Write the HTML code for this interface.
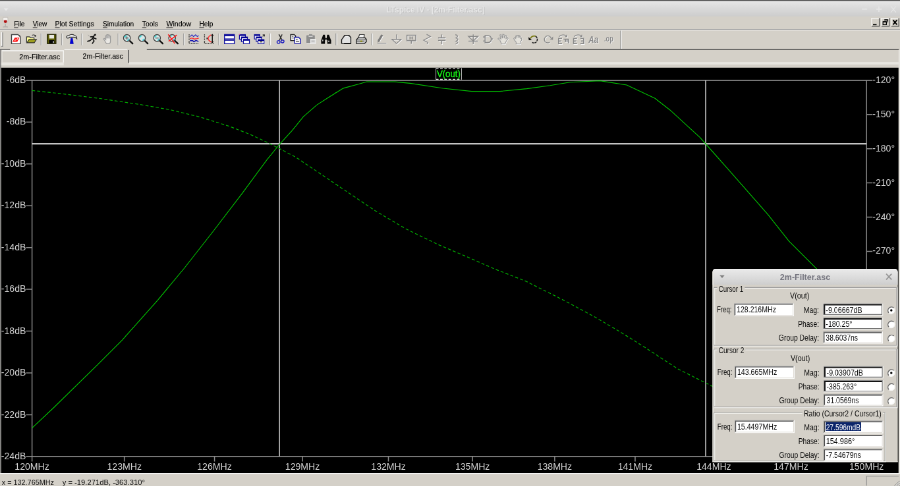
<!DOCTYPE html>
<html><head><meta charset="utf-8"><title>LTspice IV - [2m-Filter.asc]</title>
<style>
html,body{margin:0;padding:0;width:900px;height:486px;overflow:hidden;background:#d4d0c8}
body{position:relative}
#app{position:absolute;left:0;top:0;width:900px;height:486px;overflow:hidden;background:#d4d0c8}
#stage{position:absolute;left:0;top:0;width:1366px;height:738px;overflow:hidden;transform-origin:0 0;transform:scale(0.658858);will-change:transform}
svg{position:absolute;left:0;top:0;display:block;font-family:"Liberation Sans",sans-serif}
</style></head><body>
<div id="app">
<div id="stage">
<svg width="1366" height="737.64" viewBox="0 0 900 486">
<g id="chrome">
<defs>
<filter id="shw" x="-5%" y="-30%" width="110%" height="170%"><feDropShadow dx="0.55" dy="0.55" stdDeviation="0" flood-color="#fbfbfb" flood-opacity="1"/></filter>
<filter id="shd" x="-5%" y="-30%" width="110%" height="170%"><feDropShadow dx="0.4" dy="0.5" stdDeviation="0.15" flood-color="#b8b8b8" flood-opacity="1"/></filter>
<linearGradient id="gt" x1="0" y1="0" x2="0" y2="1"><stop offset="0" stop-color="#e9e9e9"/><stop offset="0.4" stop-color="#dddddd"/><stop offset="1" stop-color="#cdcdcd"/></linearGradient>
<linearGradient id="gd" x1="0" y1="0" x2="0" y2="1"><stop offset="0" stop-color="#f2f2f2"/><stop offset="0.1" stop-color="#e8e8e8"/><stop offset="0.55" stop-color="#dcdcdc"/><stop offset="1" stop-color="#cecece"/></linearGradient>
</defs>
<rect x="0" y="0" width="900" height="486" fill="#d4d0c8"/>
<rect x="0" y="0" width="900" height="16.3" fill="url(#gt)"/>
<rect x="0" y="0" width="900" height="0.9" fill="#4a4a4a"/>
<path d="M0,29.4 H900" stroke="#9a9a9a" stroke-width="0.7"/><path d="M0,30.1 H900" stroke="#f4f4f4" stroke-width="0.7"/>
<path d="M146.8,49.4 H899" stroke="#4a4a4a" stroke-width="0.9"/>
<path d="M0,49.4 H10" stroke="#5a5a5a" stroke-width="0.9"/>
<path d="M0.6,49 V473.4" stroke="#707070" stroke-width="0.9"/>
<rect x="1.2" y="62.3" width="62.6" height="3.1" fill="#e8e6e0"/>
<rect x="128.8" y="62" width="770" height="2.5" fill="#e7e5df"/>
<path d="M1.8,50.7 H63.4 V62.4" fill="none" stroke="#f8f8f6" stroke-width="0.9"/>
<path d="M2,51 V62.4" fill="none" stroke="#e6e4de" stroke-width="0.9"/>
<path d="M64.3,49.4 H127.4" stroke="#f6f6f4" stroke-width="0.9"/>
<path d="M128.5,50 V63" stroke="#505050" stroke-width="1"/>
<rect x="898.5" y="49.8" width="1.5" height="424" fill="#e6e4de"/>
<path d="M3.6,8.2 H8.4 L6,10.8 Z" fill="#e9e9e9"/>
<g stroke="#e6e6e6" stroke-width="1.1" fill="none"><path d="M862,9.1 H867.2"/><path d="M876.2,9.1 H881.6 M878.9,6.3 V11.9"/><path d="M890.8,6.2 L896,12.4 M896,6.2 L890.8,12.4" stroke-width="0.9"/></g>
<path d="M3.1,17.3 H7.7 Q8.5,21 7.3,22.7 Q5.4,24.4 3.5,22.7 Q2.3,21 3.1,17.3 Z" fill="#f1efec" stroke="#c2beba" stroke-width="0.6"/>
<path d="M3.7,20.4 Q5.4,19.8 7.1,20.4 Q7.2,22 6.4,22.7 Q5.4,23.3 4.4,22.7 Q3.6,22 3.7,20.4 Z" fill="#b01010"/>
<path d="M5.4,23.8 V26.6" stroke="#b4b0ac" stroke-width="0.9" fill="none"/><path d="M3,27 Q5.4,25.8 7.8,27 Z" fill="#c4c0bc" stroke="#aeaaa6" stroke-width="0.5"/>
<g>
<path d="M871.6,26.2 V18.2 H879.2" stroke="#fbfbfb" stroke-width="0.7" fill="none"/><path d="M871.6,26.3 H879.3 V18.2" stroke="#505050" stroke-width="0.8" fill="none"/>
<path d="M881.5,26.2 V18.2 H889.1" stroke="#fbfbfb" stroke-width="0.7" fill="none"/><path d="M881.5,26.3 H889.2 V18.2" stroke="#505050" stroke-width="0.8" fill="none"/>
<path d="M891.3,26.2 V18.2 H898.6" stroke="#fbfbfb" stroke-width="0.7" fill="none"/><path d="M891.3,26.3 H898.8 V18.2" stroke="#505050" stroke-width="0.8" fill="none"/>
<path d="M873,24.6 H876.6" stroke="#000" stroke-width="1.1"/>
<path d="M884.4,19.8 H887.8 V22.4 M883,21.6 H886.4 V24.6 H883 Z" stroke="#000" stroke-width="0.8" fill="none"/><path d="M884.4,20 H887.8 M883,21.9 H886.4" stroke="#000" stroke-width="1"/>
<path d="M893,20 L897,24.6 M897,20 L893,24.6" stroke="#000" stroke-width="1.2"/>
</g>
<path d="M620.6,30.6 V48.8" stroke="#8c8c8c" stroke-width="0.8"/><path d="M621.4,30.6 V48.8" stroke="#f6f6f6" stroke-width="0.8"/>
<path d="M1.6,32.2 V46.2" stroke="#f8f8f8" stroke-width="0.9"/><path d="M2.6,32.4 V46.4 H1.4" stroke="#8c8c8c" stroke-width="0.8" fill="none"/>
<path d="M41,33.4 V45.2" stroke="#9a9a9a" stroke-width="0.8"/><path d="M41.8,33.4 V45.2" stroke="#f2f2f2" stroke-width="0.8"/>
<path d="M61.7,33.4 V45.2" stroke="#9a9a9a" stroke-width="0.8"/><path d="M62.5,33.4 V45.2" stroke="#f2f2f2" stroke-width="0.8"/>
<path d="M81.7,33.4 V45.2" stroke="#9a9a9a" stroke-width="0.8"/><path d="M82.5,33.4 V45.2" stroke="#f2f2f2" stroke-width="0.8"/>
<path d="M118,33.4 V45.2" stroke="#9a9a9a" stroke-width="0.8"/><path d="M118.8,33.4 V45.2" stroke="#f2f2f2" stroke-width="0.8"/>
<path d="M183.7,33.4 V45.2" stroke="#9a9a9a" stroke-width="0.8"/><path d="M184.5,33.4 V45.2" stroke="#f2f2f2" stroke-width="0.8"/>
<path d="M218.7,33.4 V45.2" stroke="#9a9a9a" stroke-width="0.8"/><path d="M219.5,33.4 V45.2" stroke="#f2f2f2" stroke-width="0.8"/>
<path d="M269.7,33.4 V45.2" stroke="#9a9a9a" stroke-width="0.8"/><path d="M270.5,33.4 V45.2" stroke="#f2f2f2" stroke-width="0.8"/>
<path d="M336,33.4 V45.2" stroke="#9a9a9a" stroke-width="0.8"/><path d="M336.8,33.4 V45.2" stroke="#f2f2f2" stroke-width="0.8"/>
<path d="M371.7,33.4 V45.2" stroke="#9a9a9a" stroke-width="0.8"/><path d="M372.5,33.4 V45.2" stroke="#f2f2f2" stroke-width="0.8"/>
<path d="M11.5,34.6 H18 L20.3,36.9 V43.7 H11.5 Z" fill="#fff" stroke="#404040" stroke-width="0.9"/><path d="M12.4,41.8 L14.8,37.6 H19.6 L17.2,41.8 Z" fill="#ff1818"/><path d="M14.6,40.6 L16.2,39.6 M16.8,39.4 L18,38.4" stroke="#fff" stroke-width="0.7"/><path d="M18.2,34.8 L20.2,36.8 V35.6 Z" fill="#303030"/>
<path d="M26.6,42.6 V36.8 H29.6 L30.4,37.8 H34 V39.4" fill="#ffff9a" stroke="#303030" stroke-width="0.8"/><path d="M26.8,42.8 L29,39.4 H36.4 L34.2,42.8 Z" fill="#a0a020" stroke="#303030" stroke-width="0.8"/><path d="M32,35.6 Q33.4,34.2 35,35.4" stroke="#505050" stroke-width="0.7" fill="none"/><rect x="34.6" y="35.2" width="1.4" height="1.4" fill="#101010"/>
<rect x="47.3" y="34.4" width="8.6" height="9.2" fill="#5c5c06" stroke="#202000" stroke-width="0.9"/><rect x="49.2" y="34.9" width="4.8" height="3.6" fill="#e8e8e0"/><rect x="49" y="40.2" width="5.4" height="3.2" fill="#050505"/><rect x="52.8" y="41" width="1" height="2" fill="#d0d0d0"/>
<path d="M66.6,37.6 Q66.2,35.6 68.6,35.6 Q71.6,33.6 74.6,35.4 Q76.8,36 76.8,38.6 Q75.6,36.8 73.4,37.2 H69.6 Q68.2,38.8 66.6,37.6 Z" fill="#f4f4f4" stroke="#282828" stroke-width="0.8"/><path d="M70.9,38.2 H72.5 L73.4,43.8 H70 Z" fill="#0000d8" stroke="#0000a0" stroke-width="0.3"/>
<g stroke="#101010" stroke-width="1.1" fill="none" stroke-linecap="round"><path d="M94.6,34.6 L92.6,38.4 L94,41 L92.4,43.4"/><path d="M92.6,38.4 L89.6,40.8 L87.6,41.2"/><path d="M93.6,36.6 L90.6,36.8"/><path d="M93.4,37.8 L96,38.8"/></g><circle cx="95.2" cy="34.8" r="0.9" fill="#101010"/><path d="M88,35 L89.4,36.2" stroke="#909090" stroke-width="0.6"/>
<path d="M104.6,40.4 L103.4,39 L104.4,38.4 L105.8,39.6 V35.6 H106.8 V38.4 V34.6 H108 V38.4 V35 H109.2 V38.6 V36 H110.4 V41.4 Q110.4,43.6 108.6,43.6 H106.4 Z" fill="#e9e7e3" stroke="#9a9a9a" stroke-width="0.8"/>
<path d="M129.5,40.6 L132.6,43.6" stroke="#101010" stroke-width="1.5" stroke-linecap="round"/>
<circle cx="126.9" cy="38" r="3.4" fill="#d8e8e8" stroke="#404040" stroke-width="0.9"/>
<path d="M124.7,37.4 A2.4,2.4 0 0 1 126.5,35.7" stroke="#30e0e0" stroke-width="1" fill="none"/>
<path d="M129.1,38.6 A2.4,2.4 0 0 1 127.30000000000001,40.3" stroke="#30c8d8" stroke-width="1" fill="none"/>
<path d="M125.30000000000001,38 H128.5 M126.9,36.4 V39.6" stroke="#505050" stroke-width="0.8"/>
<path d="M144.6,40.6 L147.7,43.6" stroke="#101010" stroke-width="1.5" stroke-linecap="round"/>
<circle cx="142.0" cy="38" r="3.4" fill="#d8e8e8" stroke="#404040" stroke-width="0.9"/>
<path d="M139.8,37.4 A2.4,2.4 0 0 1 141.6,35.7" stroke="#30e0e0" stroke-width="1" fill="none"/>
<path d="M144.2,38.6 A2.4,2.4 0 0 1 142.4,40.3" stroke="#30c8d8" stroke-width="1" fill="none"/>
<path d="M159.6,40.6 L162.7,43.6" stroke="#101010" stroke-width="1.5" stroke-linecap="round"/>
<circle cx="157.0" cy="38" r="3.4" fill="#d8e8e8" stroke="#404040" stroke-width="0.9"/>
<path d="M154.8,37.4 A2.4,2.4 0 0 1 156.6,35.7" stroke="#30e0e0" stroke-width="1" fill="none"/>
<path d="M159.2,38.6 A2.4,2.4 0 0 1 157.4,40.3" stroke="#30c8d8" stroke-width="1" fill="none"/>
<path d="M155.4,38 H158.6" stroke="#606060" stroke-width="0.9"/>
<path d="M174.7,40.6 L177.79999999999998,43.6" stroke="#101010" stroke-width="1.5" stroke-linecap="round"/>
<circle cx="172.1" cy="38" r="3.4" fill="#d8e8e8" stroke="#404040" stroke-width="0.9"/>
<path d="M169.9,37.4 A2.4,2.4 0 0 1 171.7,35.7" stroke="#30e0e0" stroke-width="1" fill="none"/>
<path d="M174.29999999999998,38.6 A2.4,2.4 0 0 1 172.5,40.3" stroke="#30c8d8" stroke-width="1" fill="none"/>
<path d="M168.2,34.4 L174.79999999999998,43.6 M176.79999999999998,35 L168.6,41.2" stroke="#ff1818" stroke-width="1"/>
<path d="M189.10000000000002,34.4 V43.6 H198.70000000000002" stroke="#101010" stroke-width="0.9" fill="none" stroke-dasharray="0.8 0.8"/><path d="M190.10000000000002,36.6 L191.9,34.8 L193.5,36.6 L195.5,34.8 L197.3,36.6 L198.70000000000002,35.6" stroke="#3030c0" stroke-width="0.8" fill="none"/><path d="M189.9,38.6 L191.9,38 L194.3,39 L196.70000000000002,38.6 L198.70000000000002,38.2" stroke="#ff2020" stroke-width="0.9" fill="none"/><path d="M189.9,40.6 H192.70000000000002 L193.9,41.8 L195.9,40.4 L198.5,41.4" stroke="#1010b0" stroke-width="1" fill="none"/>
<path d="M204.5,34.4 V43.6 H213.89999999999998" stroke="#101010" stroke-width="0.9" fill="none" stroke-dasharray="0.8 0.8"/><path d="M212.29999999999998,34.6 V42.6" stroke="#101010" stroke-width="0.9" fill="none"/><path d="M211.29999999999998,35.8 L212.29999999999998,34.4 L213.29999999999998,35.8 M211.29999999999998,41.4 L212.29999999999998,42.8 L213.29999999999998,41.4" stroke="#101010" stroke-width="0.7" fill="none"/><path d="M211.1,34.8 Q205.1,38.4 211.29999999999998,42.2" stroke="#ff3030" stroke-width="0.9" fill="none"/><rect x="206.5" y="37.6" width="1.2" height="1.6" fill="#202020"/>
<rect x="224.5" y="34.5" width="9.8" height="9.2" fill="#fff" stroke="#1010a0" stroke-width="0.9"/><path d="M224.5,35.4 H234.3 M224.5,40 H234.3" stroke="#000090" stroke-width="1.3"/><path d="M224.5,38.8 H234.3" stroke="#1010a0" stroke-width="0.7"/>
<rect x="239.4" y="34.6" width="6" height="4.6" fill="#fff" stroke="#1010a0" stroke-width="0.8"/><path d="M239.4,35.2 H245.4" stroke="#000090" stroke-width="1.4"/>
<rect x="241.4" y="37" width="6" height="4.6" fill="#fff" stroke="#1010a0" stroke-width="0.8"/><path d="M241.4,37.6 H247.4" stroke="#000090" stroke-width="1.4"/>
<rect x="243.4" y="39.4" width="6" height="4.2" fill="#fff" stroke="#1010a0" stroke-width="0.8"/><path d="M243.4,40.0 H249.4" stroke="#000090" stroke-width="1.4"/>
<rect x="239.2" y="34.2" width="0.8" height="0.8" fill="#e040a0"/>
<rect x="254.4" y="34.6" width="5.4" height="4.4" fill="#fff" stroke="#1010a0" stroke-width="0.8"/><path d="M254.4,35.2 H259.8" stroke="#000090" stroke-width="1.4"/>
<rect x="256.2" y="37" width="5.4" height="4.4" fill="#fff" stroke="#1010a0" stroke-width="0.8"/><path d="M256.2,37.6 H261.59999999999997" stroke="#000090" stroke-width="1.4"/>
<rect x="258" y="39.6" width="6" height="4" fill="#fff" stroke="#1010a0" stroke-width="0.8"/><path d="M258,40.2 H264" stroke="#000090" stroke-width="1.4"/>
<rect x="259.6" y="41.2" width="2.8" height="1.2" fill="#303030"/><path d="M262.4,34.4 H264.8 V36.8 Z" fill="#303030"/><path d="M262.6,36.4 L264.2,34.8" stroke="#303030" stroke-width="0.8"/>
<path d="M278.9,34.4 L282.3,40.4 M282.09999999999997,34.4 L279.3,40.4" stroke="#303030" stroke-width="1" fill="none"/><ellipse cx="278.5" cy="42" rx="1.5" ry="1.4" fill="none" stroke="#2020c0" stroke-width="0.9"/><ellipse cx="282.5" cy="41.4" rx="1.5" ry="1.4" fill="none" stroke="#2020c0" stroke-width="0.9"/>
<path d="M290.6,34.6 H294.2 L295.6,36 V40.6 H290.6 Z" fill="#f0f0f0" stroke="#202020" stroke-width="0.9"/><path d="M291.8,36.4 H293.4 M291.8,38 H294.4" stroke="#606060" stroke-width="0.7"/><path d="M294.6,37.2 H298.6 L300.6,39.2 V43.4 H294.6 Z" fill="#f4f4f4" stroke="#1818a8" stroke-width="0.9"/><path d="M295.8,39.6 H297.6 M295.8,41.2 H299.2" stroke="#505050" stroke-width="0.8"/>
<rect x="306.4" y="35.2" width="8.4" height="8" rx="0.6" fill="#8e8e8e"/><rect x="309" y="34.2" width="3.2" height="1.6" fill="#8e8e8e"/><path d="M308.6,36.4 H312.6" stroke="#e8e8e8" stroke-width="0.7"/><rect x="310.6" y="39.2" width="5" height="4.4" fill="#dcdcdc" stroke="#f4f4f4" stroke-width="0.6"/><path d="M311.4,41 H314.6" stroke="#9a9a9a" stroke-width="0.6"/><path d="M306.6,43.8 H310.4" stroke="#fafafa" stroke-width="0.7"/>
<path d="M323.09999999999997,34.8 H324.9 L325.3,38 H326.7,L327.09999999999997,34.8 H328.9 L331.09999999999997,40.4 V43.8 H327.3 V40.2 H324.9 V43.8 H321.09999999999997 V40.4 Z" fill="#080808"/><rect x="322.3" y="39.6" width="0.9" height="1.6" fill="#e0e0e0"/><rect x="328.3" y="40.6" width="0.9" height="1.6" fill="#e0e0e0"/><rect x="325.5" y="38.8" width="1" height="1" fill="#d0d0d0"/>
<path d="M341.6,43.4 V39.6 L344.6,35.4 H349 L350.8,37.4 V43.4 Z" fill="#e2e2e2" stroke="#181818" stroke-width="0.9"/><path d="M344,43.6 H350.8" stroke="#101010" stroke-width="1.1"/><path d="M345.4,36.4 H348" stroke="#fff" stroke-width="0.8"/>
<path d="M358.3,37.8 L359.5,34.6 H364.3 L363.9,37.8" fill="#f4f4f4" stroke="#303030" stroke-width="0.8"/><path d="M356.3,39.8 L358.3,37.6 H364.9 L366.3,39.2 V41.8 L364.3,43.6 H356.3 Z" fill="#c8c8c8" stroke="#202020" stroke-width="0.9"/><path d="M356.3,40 H364.09999999999997 L366.09999999999997,38.8 M356.7,41.8 H364.09999999999997" stroke="#404040" stroke-width="0.6" fill="none"/><rect x="360.3" y="40.6" width="2" height="1" fill="#b0b000"/>
<g transform="translate(0.6,0.6)"><path d="M377.6,43.2 H386.4" stroke="#f6f6f6" stroke-width="0.8" fill="none"/></g><path d="M377.6,43.2 H386.4" stroke="#8a8a8a" stroke-width="0.8" fill="none"/>
<path d="M381.2,34.4 L383.2,35.4 L379.8,41.2 L377.6,42.6 L377.8,40 Z" fill="#7c7c7c"/><path d="M383.2,36 L380,41.4" stroke="#f6f6f6" stroke-width="0.7"/>
<g transform="translate(0.6,0.6)"><path d="M396.5,34.4 V39.4 M391.90000000000003,39.4 H401.1 L396.5,43.6 Z" stroke="#f6f6f6" stroke-width="0.9" fill="none"/></g><path d="M396.5,34.4 V39.4 M391.90000000000003,39.4 H401.1 L396.5,43.6 Z" stroke="#8a8a8a" stroke-width="0.9" fill="none"/>
<g transform="translate(0.6,0.6)"><path d="M406.90000000000003,35.2 H415.7 V40.6 H406.90000000000003 Z M411.3,40.6 V43.8" stroke="#f6f6f6" stroke-width="1.0" fill="none"/></g><path d="M406.90000000000003,35.2 H415.7 V40.6 H406.90000000000003 Z M411.3,40.6 V43.8" stroke="#8a8a8a" stroke-width="1.0" fill="none"/>
<path d="M409.90000000000003,36.6 V39.4 M412.5,36.6 V39.4 M409.90000000000003,38 H412.5" stroke="#8a8a8a" stroke-width="0.8" fill="none"/>
<g transform="translate(0.6,0.6)"><path d="M426.6,34.4 L430.4,36.6 L423.6,40.2 L427.6,42.4 L427.2,44.2" stroke="#f6f6f6" stroke-width="0.9" fill="none"/></g><path d="M426.6,34.4 L430.4,36.6 L423.6,40.2 L427.6,42.4 L427.2,44.2" stroke="#8a8a8a" stroke-width="0.9" fill="none"/>
<g transform="translate(0.6,0.6)"><path d="M441.7,34.4 V37.6 M438.09999999999997,37.8 H445.5 M438.09999999999997,40.4 H445.5 M441.7,40.6 V44.2" stroke="#f6f6f6" stroke-width="1.0" fill="none"/></g><path d="M441.7,34.4 V37.6 M438.09999999999997,37.8 H445.5 M438.09999999999997,40.4 H445.5 M441.7,40.6 V44.2" stroke="#8a8a8a" stroke-width="1.0" fill="none"/>
<g transform="translate(0.6,0.6)"><path d="M455.4,34.6 Q459.4,36 456,38 Q459.8,39.6 456,41.2 Q459.6,42.6 455.6,44" stroke="#f6f6f6" stroke-width="0.9" fill="none"/></g><path d="M455.4,34.6 Q459.4,36 456,38 Q459.8,39.6 456,41.2 Q459.6,42.6 455.6,44" stroke="#8a8a8a" stroke-width="0.9" fill="none"/>
<g transform="translate(0.6,0.6)"><path d="M473.2,34.4 V44.2 M468.4,36.4 H478 L473.2,41 Z M468.6,41.2 H477.8" stroke="#f6f6f6" stroke-width="0.9" fill="none"/></g><path d="M473.2,34.4 V44.2 M468.4,36.4 H478 L473.2,41 Z M468.6,41.2 H477.8" stroke="#8a8a8a" stroke-width="0.9" fill="none"/>
<g transform="translate(0.6,0.6)"><path d="M483.09999999999997,37 H484.9 M483.09999999999997,41 H484.9 M485.09999999999997,35.6 H487.7 Q491.3,35.8 491.3,39 Q491.3,42.4 487.7,42.6 H485.09999999999997 Z M491.3,39 H492.9" stroke="#f6f6f6" stroke-width="1.1" fill="none"/></g><path d="M483.09999999999997,37 H484.9 M483.09999999999997,41 H484.9 M485.09999999999997,35.6 H487.7 Q491.3,35.8 491.3,39 Q491.3,42.4 487.7,42.6 H485.09999999999997 Z M491.3,39 H492.9" stroke="#8a8a8a" stroke-width="1.1" fill="none"/>
<g transform="translate(0.5,0.5)"><path d="M499.90000000000003,40.2 L497.90000000000003,38.8 L498.90000000000003,37.8 L500.90000000000003,39 L499.90000000000003,35 L501.1,34.6 L502.3,38.2 L502.7,34.4 L504.1,34.6 L504.1,38.2 L505.3,35.2 L506.5,35.8 L505.90000000000003,38.6 L507.5,37.6 L508.1,38.6 L505.7,42 L504.90000000000003,44 H501.5 Z" fill="none" stroke="#f8f8f8" stroke-width="0.7"/></g><path d="M499.90000000000003,40.2 L497.90000000000003,38.8 L498.90000000000003,37.8 L500.90000000000003,39 L499.90000000000003,35 L501.1,34.6 L502.3,38.2 L502.7,34.4 L504.1,34.6 L504.1,38.2 L505.3,35.2 L506.5,35.8 L505.90000000000003,38.6 L507.5,37.6 L508.1,38.6 L505.7,42 L504.90000000000003,44 H501.5 Z" fill="#e4e2dc" stroke="#9a9a9a" stroke-width="0.7"/>
<g transform="translate(0.5,0.5)"><path d="M514.9,40.6 L513.6999999999999,38.6 L514.6999999999999,37.6 L515.6999999999999,38.4 V36 H516.9 V37.8 V35.2 H518.0999999999999 V37.8 V35.4 H519.3,V37.8 V36.2 H520.5 V38.4 L521.5,38 L521.6999999999999,40 L520.3,42 V44 H516.0999999999999 V42.2 Z" fill="none" stroke="#f8f8f8" stroke-width="0.7"/></g><path d="M514.9,40.6 L513.6999999999999,38.6 L514.6999999999999,37.6 L515.6999999999999,38.4 V36 H516.9 V37.8 V35.2 H518.0999999999999 V37.8 V35.4 H519.3,V37.8 V36.2 H520.5 V38.4 L521.5,38 L521.6999999999999,40 L520.3,42 V44 H516.0999999999999 V42.2 Z" fill="#e4e2dc" stroke="#9a9a9a" stroke-width="0.7"/>
<path d="M530.4,38.4 Q532.2,35.2 535.6,36.2" stroke="#7a7a10" stroke-width="1.2" fill="none"/><path d="M535.6,36.2 Q538.4,38.6 536.6,41.6 Q534.6,43.8 532.2,42.4" stroke="#202020" stroke-width="1" fill="none" stroke-dasharray="2.4 0.6"/><path d="M528.4,37 L531.8,39.8 L528.8,40.2 Z" fill="#101010"/>
<g transform="translate(0.6,0.6)"><path d="M551.0999999999999,38 Q549.3,35 546.3,36.2 Q543.3,38.4 544.9,41.4 Q546.9,43.8 549.6999999999999,42.2" stroke="#f6f6f6" stroke-width="0.9" fill="none"/></g><path d="M551.0999999999999,38 Q549.3,35 546.3,36.2 Q543.3,38.4 544.9,41.4 Q546.9,43.8 549.6999999999999,42.2" stroke="#8a8a8a" stroke-width="0.9" fill="none"/>
<path d="M553.0999999999999,36.6 L549.9,39.4 L552.9,39.8 Z" fill="#8a8a8a"/>
<g transform="translate(0.6,0.6)"><path d="M559,36.6 Q562.6,33.4 566.6,36 M566.8,34.8 V36.6 H565.2" stroke="#f6f6f6" stroke-width="0.8" fill="none"/></g><path d="M559,36.6 Q562.6,33.4 566.6,36 M566.8,34.8 V36.6 H565.2" stroke="#8a8a8a" stroke-width="0.8" fill="none"/>
<g transform="translate(0.6,0.6)"><path d="M562,38.4 H558.6 V43.6 H562 M558.6,41 H561.2" stroke="#f6f6f6" stroke-width="1.1" fill="none"/></g><path d="M562,38.4 H558.6 V43.6 H562 M558.6,41 H561.2" stroke="#8a8a8a" stroke-width="1.1" fill="none"/>
<g transform="translate(0.6,0.6)"><path d="M563.6,39.2 H568.4 V43.4 M565.4,39.4 V42 M567,39.4 V42" stroke="#f6f6f6" stroke-width="1.1" fill="none"/></g><path d="M563.6,39.2 H568.4 V43.4 M565.4,39.4 V42 M567,39.4 V42" stroke="#8a8a8a" stroke-width="1.1" fill="none"/>
<g transform="translate(0.6,0.6)"><path d="M574,36.6 Q577.6,33.4 581.6,36 M581.8,34.8 V36.6 H580.2" stroke="#f6f6f6" stroke-width="0.8" fill="none"/></g><path d="M574,36.6 Q577.6,33.4 581.6,36 M581.8,34.8 V36.6 H580.2" stroke="#8a8a8a" stroke-width="0.8" fill="none"/>
<g transform="translate(0.6,0.6)"><path d="M577,38.4 H573.6 V43.6 H577 M573.6,41 H576.2" stroke="#f6f6f6" stroke-width="1.1" fill="none"/></g><path d="M577,38.4 H573.6 V43.6 H577 M573.6,41 H576.2" stroke="#8a8a8a" stroke-width="1.1" fill="none"/>
<g transform="translate(0.6,0.6)"><path d="M580.4,38.4 H583.6 V43.6 H580.4 M581.2,41 H583.6" stroke="#f6f6f6" stroke-width="1.1" fill="none"/></g><path d="M580.4,38.4 H583.6 V43.6 H580.4 M581.2,41 H583.6" stroke="#8a8a8a" stroke-width="1.1" fill="none"/>
<path d="M14.0,27.55 h4.1 M32.8,27.55 h4.4 M55.0,27.55 h4.6 M102.8,27.55 h4.4 M142.2,27.55 h4.1 M166.3,27.55 h6.6 M199.3,27.55 h4.8" stroke="#303030" stroke-width="0.6" fill="none"/>
<g>
<text x="14.00" y="26.30" font-size="7.7" fill="#000000" textLength="10.70" lengthAdjust="spacingAndGlyphs" stroke="#000" stroke-width="0.1">File</text>
<text x="32.80" y="26.30" font-size="7.7" fill="#000000" textLength="14.20" lengthAdjust="spacingAndGlyphs" stroke="#000" stroke-width="0.1">View</text>
<text x="55.00" y="26.30" font-size="7.7" fill="#000000" textLength="39.00" lengthAdjust="spacingAndGlyphs" stroke="#000" stroke-width="0.1">Plot Settings</text>
<text x="102.80" y="26.30" font-size="7.7" fill="#000000" textLength="31.10" lengthAdjust="spacingAndGlyphs" stroke="#000" stroke-width="0.1">Simulation</text>
<text x="142.20" y="26.30" font-size="7.7" fill="#000000" textLength="15.80" lengthAdjust="spacingAndGlyphs" stroke="#000" stroke-width="0.1">Tools</text>
<text x="166.30" y="26.30" font-size="7.7" fill="#000000" textLength="24.90" lengthAdjust="spacingAndGlyphs" stroke="#000" stroke-width="0.1">Window</text>
<text x="199.30" y="26.30" font-size="7.7" fill="#000000" textLength="13.70" lengthAdjust="spacingAndGlyphs" stroke="#000" stroke-width="0.1">Help</text>
<text x="19.30" y="59.30" font-size="7.7" fill="#000000" textLength="40.70" lengthAdjust="spacingAndGlyphs" stroke="#000" stroke-width="0.1">2m-Filter.asc</text>
<text x="82.70" y="58.60" font-size="7.7" fill="#000000" textLength="40.40" lengthAdjust="spacingAndGlyphs" stroke="#000" stroke-width="0.1">2m-Filter.asc</text>
<text x="386.30" y="12.50" font-size="8.2" font-weight="bold" fill="#e9e9e9" textLength="98.30" lengthAdjust="spacingAndGlyphs" filter="url(#shd)">LTspice IV - [2m-Filter.asc]</text>
<text x="588.60" y="43.10" font-size="9.4" font-weight="bold" fill="#8a8a8a" textLength="9.80" lengthAdjust="spacingAndGlyphs" font-style="italic" filter="url(#shw)">Aa</text>
<text x="604.20" y="41.70" font-size="8.2" font-weight="bold" fill="#8a8a8a" textLength="9.10" lengthAdjust="spacingAndGlyphs" filter="url(#shw)">.op</text>
</g>
</g>
<g id="plot">
<rect x="1.2" y="67.7" width="897.3" height="405.4" fill="#000"/>
<g stroke="#8c8c8c" stroke-width="1" fill="none">
<path d="M32.0,80.3 H866.5 V456.5 H32.0 Z"/>
<path d="M26.0,80.3 H32.0 M26.0,122.1 H32.0 M26.0,163.9 H32.0 M26.0,205.7 H32.0 M26.0,247.5 H32.0 M26.0,289.3 H32.0 M26.0,331.1 H32.0 M26.0,372.9 H32.0 M26.0,414.7 H32.0 M26.0,456.5 H32.0 M866.5,80.3 H872.5 M866.5,114.5 H872.5 M866.5,148.7 H872.5 M866.5,182.9 H872.5 M866.5,217.1 H872.5 M866.5,251.3 H872.5 M866.5,285.5 H872.5 M866.5,319.7 H872.5 M866.5,353.9 H872.5 M866.5,388.1 H872.5 M866.5,422.3 H872.5 M866.5,456.5 H872.5 M32.0,456.5 V461.5 M124.3,456.5 V461.5 M214.5,456.5 V461.5 M302.5,456.5 V461.5 M388.4,456.5 V461.5 M472.5,456.5 V461.5 M554.7,456.5 V461.5 M635.1,456.5 V461.5 M713.8,456.5 V461.5 M790.9,456.5 V461.5 M866.5,456.5 V461.5"/>
</g>
<path d="M32.0,143.8 H866.5" stroke="#f0f0f0" stroke-width="1.3" fill="none"/>
<path d="M279.5,80.3 V456.5 M705.6,80.3 V456.5" stroke="#c4c4c4" stroke-width="1" fill="none"/>
<path d="M32.0,90.5 L60.0,93.5 L100.0,98.5 L140.0,104.5 L170.0,109.7 L200.0,117.0 L230.0,126.5 L250.8,134.7 L261.6,139.7 L266.3,142.0 L271.5,144.6 L275.8,146.8 L282.3,150.0 L287.5,153.0 L293.3,155.8 L298.3,158.8 L303.3,162.3 L308.3,165.6 L344.4,190.0 L375.6,211.0 L406.7,229.3 L437.8,244.4 L466.7,256.7 L494.4,268.9 L525.6,281.1 L561.1,298.9 L594.4,316.7 L618.9,331.1 L645.6,347.8 L677.8,368.9 L711.0,385.6 L760.0,410.0 L866.0,456.0" stroke="#00b000" stroke-width="0.78" fill="none" stroke-dasharray="3.1 2.1"/>
<path d="M32.0,428.0 L53.3,408.0 L97.8,364.4 L122.2,340.0 L157.8,300.0 L184.4,268.0 L213.3,231.1 L242.2,193.3 L266.7,160.0 L279.5,144.3 L287.1,135.9 L292.1,130.5 L303.3,116.7 L316.7,105.0 L328.3,97.5 L343.3,88.2 L358.3,84.2 L366.7,81.7 L395.0,81.8 L410.0,83.3 L443.0,88.3 L471.7,91.3 L500.0,91.3 L526.7,88.7 L550.0,85.5 L570.0,82.2 L600.0,80.8 L626.7,85.0 L655.0,98.3 L670.0,110.0 L688.3,126.7 L700.0,137.5 L705.6,143.8 L736.7,178.9 L767.8,214.4 L788.9,241.0 L815.6,267.8 L840.0,294.0 L866.0,322.0" stroke="#00c400" stroke-width="0.75" fill="none"/>
<path d="M435.9,68.4 V79.4 M461.5,68.4 V79.4" fill="none" stroke="#b4b4b4" stroke-width="0.7"/>
<path d="M435.9,68.5 H461.5 M435.9,79.3 H461.5" fill="none" stroke="#dcdcdc" stroke-width="0.8" stroke-dasharray="2.6 1.6"/>
<g>
<text x="26.00" y="83.00" font-size="9.3" text-anchor="end" fill="#d0d0d0">-6dB</text>
<text x="26.00" y="124.80" font-size="9.3" text-anchor="end" fill="#d0d0d0">-8dB</text>
<text x="26.00" y="166.60" font-size="9.3" text-anchor="end" fill="#d0d0d0">-10dB</text>
<text x="26.00" y="208.40" font-size="9.3" text-anchor="end" fill="#d0d0d0">-12dB</text>
<text x="26.00" y="250.20" font-size="9.3" text-anchor="end" fill="#d0d0d0">-14dB</text>
<text x="26.00" y="292.00" font-size="9.3" text-anchor="end" fill="#d0d0d0">-16dB</text>
<text x="26.00" y="333.80" font-size="9.3" text-anchor="end" fill="#d0d0d0">-18dB</text>
<text x="26.00" y="375.60" font-size="9.3" text-anchor="end" fill="#d0d0d0">-20dB</text>
<text x="26.00" y="417.40" font-size="9.3" text-anchor="end" fill="#d0d0d0">-22dB</text>
<text x="26.00" y="459.20" font-size="9.3" text-anchor="end" fill="#d0d0d0">-24dB</text>
<text x="872.50" y="83.00" font-size="9.3" fill="#d0d0d0">-120°</text>
<text x="872.50" y="117.20" font-size="9.3" fill="#d0d0d0">-150°</text>
<text x="872.50" y="151.40" font-size="9.3" fill="#d0d0d0">-180°</text>
<text x="872.50" y="185.60" font-size="9.3" fill="#d0d0d0">-210°</text>
<text x="872.50" y="219.80" font-size="9.3" fill="#d0d0d0">-240°</text>
<text x="872.50" y="254.00" font-size="9.3" fill="#d0d0d0">-270°</text>
<text x="32.00" y="469.80" font-size="9.3" text-anchor="middle" fill="#d0d0d0">120MHz</text>
<text x="124.34" y="469.80" font-size="9.3" text-anchor="middle" fill="#d0d0d0">123MHz</text>
<text x="214.46" y="469.80" font-size="9.3" text-anchor="middle" fill="#d0d0d0">126MHz</text>
<text x="302.46" y="469.80" font-size="9.3" text-anchor="middle" fill="#d0d0d0">129MHz</text>
<text x="388.44" y="469.80" font-size="9.3" text-anchor="middle" fill="#d0d0d0">132MHz</text>
<text x="472.48" y="469.80" font-size="9.3" text-anchor="middle" fill="#d0d0d0">135MHz</text>
<text x="554.67" y="469.80" font-size="9.3" text-anchor="middle" fill="#d0d0d0">138MHz</text>
<text x="635.10" y="469.80" font-size="9.3" text-anchor="middle" fill="#d0d0d0">141MHz</text>
<text x="713.84" y="469.80" font-size="9.3" text-anchor="middle" fill="#d0d0d0">144MHz</text>
<text x="790.95" y="469.80" font-size="9.3" text-anchor="middle" fill="#d0d0d0">147MHz</text>
<text x="866.50" y="469.80" font-size="9.3" text-anchor="middle" fill="#d0d0d0">150MHz</text>
<text x="436.80" y="77.20" font-size="9.3" fill="#18f818" textLength="23.60" lengthAdjust="spacingAndGlyphs" stroke="#18f818" stroke-width="0.25">V(out)</text>
</g>
</g>
<g id="cursor-dialog">
<path d="M712.5,462.1 V272.2 Q712.5,268.8 715.9,268.8 H894.4 Q897.8,268.8 897.8,272.2 V462.1 Z" fill="#d4d0c8"/>
<path d="M712.5,284.6 V272.2 Q712.5,268.8 715.9,268.8 H894.4 Q897.8,268.8 897.8,272.2 V284.6 Z" fill="url(#gd)"/>
<path d="M713.0,462.1 V271.8" stroke="#e6e4de" stroke-width="1" fill="none"/>
<path d="M712.5,461.70000000000005 H897.8" stroke="#e2e0da" stroke-width="0.8" fill="none"/>
<path d="M719.6,275.2 H724.6 L722.1,278 Z" fill="#808080"/>
<path d="M886.2,273.8 L891.6,279.6 M891.6,273.8 L886.2,279.6" stroke="#979797" stroke-width="1.2" fill="none"/>
<path d="M717.2,287.5 H714.0 V345.4 H896.6 V287.5 H744.6999999999999" fill="none" stroke="#9a9a9a" stroke-width="0.7"/>
<path d="M717.2,288.2 H714.7 V344.7 M714.0,346.09999999999997 H897.3000000000001 V287.5 M744.6999999999999,288.2 H895.9" fill="none" stroke="#f6f6f4" stroke-width="0.7"/>
<rect x="734.10" y="303.40" width="59.80" height="12.80" fill="#fff"/>
<path d="M734.45,315.60 V303.75 H793.30" fill="none" stroke="#848484" stroke-width="0.7"/>
<path d="M735.10,315.00 V304.40 H792.70" fill="none" stroke="#484848" stroke-width="0.7"/>
<path d="M734.80,315.30 H793.00 V304.10" fill="none" stroke="#dcd9d2" stroke-width="0.6"/>
<rect x="823.20" y="303.55" width="59.20" height="11.50" fill="#fff"/>
<path d="M823.50,315.05 V303.85 H882.40" fill="none" stroke="#808080" stroke-width="0.6"/>
<path d="M824.45,314.45 V304.80 H881.80" fill="none" stroke="#141414" stroke-width="1.3"/>
<path d="M823.80,314.55 H881.90 V304.15" fill="none" stroke="#6e6e6e" stroke-width="0.8"/>
<path d="M823.20,315.40 H882.75 V303.55" fill="none" stroke="#f4f4f2" stroke-width="0.7"/>
<circle cx="891.3" cy="310.40000000000003" r="3.5" fill="#fff"/>
<path d="M888.83,312.87 A3.5,3.5 0 0 1 893.77,307.93" fill="none" stroke="#6a6a6a" stroke-width="1"/>
<path d="M888.83,312.87 A3.5,3.5 0 0 0 893.77,307.93" fill="none" stroke="#f6f6f4" stroke-width="0.9"/>
<circle cx="891.3" cy="310.40000000000003" r="1.15" fill="#000"/>
<rect x="823.20" y="317.60" width="59.20" height="11.50" fill="#fff"/>
<path d="M823.50,329.10 V317.90 H882.40" fill="none" stroke="#808080" stroke-width="0.6"/>
<path d="M824.45,328.50 V318.85 H881.80" fill="none" stroke="#141414" stroke-width="1.3"/>
<path d="M823.80,328.60 H881.90 V318.20" fill="none" stroke="#6e6e6e" stroke-width="0.8"/>
<path d="M823.20,329.45 H882.75 V317.60" fill="none" stroke="#f4f4f2" stroke-width="0.7"/>
<circle cx="891.3" cy="324.45000000000005" r="3.5" fill="#fff"/>
<path d="M888.83,326.92 A3.5,3.5 0 0 1 893.77,321.98" fill="none" stroke="#6a6a6a" stroke-width="1"/>
<path d="M888.83,326.92 A3.5,3.5 0 0 0 893.77,321.98" fill="none" stroke="#f6f6f4" stroke-width="0.9"/>
<rect x="823.20" y="331.65" width="59.60" height="11.95" fill="#fff"/>
<path d="M823.55,343.00 V332.00 H882.20" fill="none" stroke="#848484" stroke-width="0.7"/>
<path d="M824.20,342.40 V332.65 H881.60" fill="none" stroke="#484848" stroke-width="0.7"/>
<path d="M823.90,342.70 H881.90 V332.35" fill="none" stroke="#dcd9d2" stroke-width="0.6"/>
<circle cx="891.3" cy="338.50000000000006" r="3.5" fill="#fff"/>
<path d="M888.83,340.97 A3.5,3.5 0 0 1 893.77,336.03" fill="none" stroke="#6a6a6a" stroke-width="1"/>
<path d="M888.83,340.97 A3.5,3.5 0 0 0 893.77,336.03" fill="none" stroke="#f6f6f4" stroke-width="0.9"/>
<path d="M717.2,349.2 H714.0 V407.0 H896.6 V349.2 H745.5" fill="none" stroke="#9a9a9a" stroke-width="0.7"/>
<path d="M717.2,349.9 H714.7 V406.3 M714.0,407.7 H897.3000000000001 V349.2 M745.5,349.9 H895.9" fill="none" stroke="#f6f6f4" stroke-width="0.7"/>
<rect x="734.70" y="366.00" width="59.80" height="12.80" fill="#fff"/>
<path d="M735.05,378.20 V366.35 H793.90" fill="none" stroke="#848484" stroke-width="0.7"/>
<path d="M735.70,377.60 V367.00 H793.30" fill="none" stroke="#484848" stroke-width="0.7"/>
<path d="M735.40,377.90 H793.60 V366.70" fill="none" stroke="#dcd9d2" stroke-width="0.6"/>
<rect x="823.60" y="366.15" width="59.20" height="11.50" fill="#fff"/>
<path d="M823.90,377.65 V366.45 H882.80" fill="none" stroke="#808080" stroke-width="0.6"/>
<path d="M824.85,377.05 V367.40 H882.20" fill="none" stroke="#141414" stroke-width="1.3"/>
<path d="M824.20,377.15 H882.30 V366.75" fill="none" stroke="#6e6e6e" stroke-width="0.8"/>
<path d="M823.60,378.00 H883.15 V366.15" fill="none" stroke="#f4f4f2" stroke-width="0.7"/>
<circle cx="891.3" cy="373.0" r="3.5" fill="#fff"/>
<path d="M888.83,375.47 A3.5,3.5 0 0 1 893.77,370.53" fill="none" stroke="#6a6a6a" stroke-width="1"/>
<path d="M888.83,375.47 A3.5,3.5 0 0 0 893.77,370.53" fill="none" stroke="#f6f6f4" stroke-width="0.9"/>
<circle cx="891.3" cy="373.0" r="1.15" fill="#000"/>
<rect x="823.60" y="380.20" width="59.20" height="11.50" fill="#fff"/>
<path d="M823.90,391.70 V380.50 H882.80" fill="none" stroke="#808080" stroke-width="0.6"/>
<path d="M824.85,391.10 V381.45 H882.20" fill="none" stroke="#141414" stroke-width="1.3"/>
<path d="M824.20,391.20 H882.30 V380.80" fill="none" stroke="#6e6e6e" stroke-width="0.8"/>
<path d="M823.60,392.05 H883.15 V380.20" fill="none" stroke="#f4f4f2" stroke-width="0.7"/>
<circle cx="891.3" cy="387.05" r="3.5" fill="#fff"/>
<path d="M888.83,389.52 A3.5,3.5 0 0 1 893.77,384.58" fill="none" stroke="#6a6a6a" stroke-width="1"/>
<path d="M888.83,389.52 A3.5,3.5 0 0 0 893.77,384.58" fill="none" stroke="#f6f6f4" stroke-width="0.9"/>
<rect x="823.60" y="394.25" width="59.60" height="11.95" fill="#fff"/>
<path d="M823.95,405.60 V394.60 H882.60" fill="none" stroke="#848484" stroke-width="0.7"/>
<path d="M824.60,405.00 V395.25 H882.00" fill="none" stroke="#484848" stroke-width="0.7"/>
<path d="M824.30,405.30 H882.30 V394.95" fill="none" stroke="#dcd9d2" stroke-width="0.6"/>
<circle cx="891.3" cy="401.1" r="3.5" fill="#fff"/>
<path d="M888.83,403.57 A3.5,3.5 0 0 1 893.77,398.63" fill="none" stroke="#6a6a6a" stroke-width="1"/>
<path d="M888.83,403.57 A3.5,3.5 0 0 0 893.77,398.63" fill="none" stroke="#f6f6f4" stroke-width="0.9"/>
<path d="M802.4,412.6 H714.0 V461.0 H885.0 V412.6 H882.8" fill="none" stroke="#9a9a9a" stroke-width="0.7"/>
<path d="M802.4,413.3 H714.7 V460.3 M714.0,461.7 H885.7 V412.6 M882.8,413.3 H884.3" fill="none" stroke="#f6f6f4" stroke-width="0.7"/>
<rect x="734.70" y="420.20" width="59.80" height="12.80" fill="#fff"/>
<path d="M735.05,432.40 V420.55 H793.90" fill="none" stroke="#848484" stroke-width="0.7"/>
<path d="M735.70,431.80 V421.20 H793.30" fill="none" stroke="#484848" stroke-width="0.7"/>
<path d="M735.40,432.10 H793.60 V420.90" fill="none" stroke="#dcd9d2" stroke-width="0.6"/>
<rect x="823.60" y="420.75" width="59.60" height="12.65" fill="#fff"/>
<path d="M823.95,432.80 V421.10 H882.60" fill="none" stroke="#848484" stroke-width="0.7"/>
<path d="M824.60,432.20 V421.75 H882.00" fill="none" stroke="#484848" stroke-width="0.7"/>
<path d="M824.30,432.50 H882.30 V421.45" fill="none" stroke="#dcd9d2" stroke-width="0.6"/>
<rect x="825.7" y="422.1" width="35.4" height="8.8" fill="#0a246a"/>
<rect x="823.60" y="434.80" width="59.60" height="12.65" fill="#fff"/>
<path d="M823.95,446.85 V435.15 H882.60" fill="none" stroke="#848484" stroke-width="0.7"/>
<path d="M824.60,446.25 V435.80 H882.00" fill="none" stroke="#484848" stroke-width="0.7"/>
<path d="M824.30,446.55 H882.30 V435.50" fill="none" stroke="#dcd9d2" stroke-width="0.6"/>
<rect x="823.60" y="448.85" width="59.60" height="12.65" fill="#fff"/>
<path d="M823.95,460.90 V449.20 H882.60" fill="none" stroke="#848484" stroke-width="0.7"/>
<path d="M824.60,460.30 V449.85 H882.00" fill="none" stroke="#484848" stroke-width="0.7"/>
<path d="M824.30,460.60 H882.30 V449.55" fill="none" stroke="#dcd9d2" stroke-width="0.6"/>
<g>
<text x="780.00" y="279.80" font-size="8.4" font-weight="bold" fill="#74747e" textLength="50.30" lengthAdjust="spacingAndGlyphs">2m-Filter.asc</text>
<text x="718.60" y="291.60" font-size="8.4" fill="#0a0a0a" textLength="24.70" lengthAdjust="spacingAndGlyphs">Cursor 1</text>
<text x="790.00" y="298.50" font-size="8.4" fill="#0a0a0a" textLength="19.30" lengthAdjust="spacingAndGlyphs">V(out)</text>
<text x="716.80" y="312.50" font-size="8.4" fill="#0a0a0a" textLength="14.90" lengthAdjust="spacingAndGlyphs">Freq:</text>
<text x="736.70" y="312.50" font-size="8.4" fill="#0a0a0a" textLength="39.40" lengthAdjust="spacingAndGlyphs">128.216MHz</text>
<text x="803.60" y="312.80" font-size="8.4" fill="#0a0a0a" textLength="15.40" lengthAdjust="spacingAndGlyphs">Mag:</text>
<text x="825.80" y="312.80" font-size="8.4" fill="#0a0a0a" textLength="36.40" lengthAdjust="spacingAndGlyphs">-9.06667dB</text>
<text x="798.00" y="326.85" font-size="8.4" fill="#0a0a0a" textLength="21.00" lengthAdjust="spacingAndGlyphs">Phase:</text>
<text x="825.80" y="326.85" font-size="8.4" fill="#0a0a0a" textLength="26.50" lengthAdjust="spacingAndGlyphs">-180.25°</text>
<text x="778.70" y="340.90" font-size="8.4" fill="#0a0a0a" textLength="40.30" lengthAdjust="spacingAndGlyphs">Group Delay:</text>
<text x="825.80" y="340.90" font-size="8.4" fill="#0a0a0a" textLength="32.10" lengthAdjust="spacingAndGlyphs">38.6037ns</text>
<text x="718.60" y="353.40" font-size="8.4" fill="#0a0a0a" textLength="25.50" lengthAdjust="spacingAndGlyphs">Cursor 2</text>
<text x="790.60" y="360.90" font-size="8.4" fill="#0a0a0a" textLength="19.30" lengthAdjust="spacingAndGlyphs">V(out)</text>
<text x="717.40" y="375.10" font-size="8.4" fill="#0a0a0a" textLength="14.90" lengthAdjust="spacingAndGlyphs">Freq:</text>
<text x="737.20" y="375.10" font-size="8.4" fill="#0a0a0a" textLength="39.80" lengthAdjust="spacingAndGlyphs">143.665MHz</text>
<text x="804.00" y="375.40" font-size="8.4" fill="#0a0a0a" textLength="15.40" lengthAdjust="spacingAndGlyphs">Mag:</text>
<text x="826.60" y="375.40" font-size="8.4" fill="#0a0a0a" textLength="36.50" lengthAdjust="spacingAndGlyphs">-9.03907dB</text>
<text x="798.40" y="389.45" font-size="8.4" fill="#0a0a0a" textLength="21.00" lengthAdjust="spacingAndGlyphs">Phase:</text>
<text x="826.60" y="389.45" font-size="8.4" fill="#0a0a0a" textLength="30.00" lengthAdjust="spacingAndGlyphs">-385.263°</text>
<text x="779.10" y="403.50" font-size="8.4" fill="#0a0a0a" textLength="40.30" lengthAdjust="spacingAndGlyphs">Group Delay:</text>
<text x="826.60" y="403.50" font-size="8.4" fill="#0a0a0a" textLength="32.20" lengthAdjust="spacingAndGlyphs">31.0569ns</text>
<text x="803.80" y="416.60" font-size="8.4" fill="#0a0a0a" textLength="77.60" lengthAdjust="spacingAndGlyphs">Ratio (Cursor2 / Cursor1)</text>
<text x="717.40" y="429.30" font-size="8.4" fill="#0a0a0a" textLength="14.90" lengthAdjust="spacingAndGlyphs">Freq:</text>
<text x="737.20" y="429.30" font-size="8.4" fill="#0a0a0a" textLength="39.80" lengthAdjust="spacingAndGlyphs">15.4497MHz</text>
<text x="804.00" y="430.00" font-size="8.4" fill="#0a0a0a" textLength="15.40" lengthAdjust="spacingAndGlyphs">Mag:</text>
<text x="826.00" y="430.00" font-size="8.4" fill="#ffffff" textLength="34.60" lengthAdjust="spacingAndGlyphs">27.596mdB</text>
<text x="798.40" y="444.05" font-size="8.4" fill="#0a0a0a" textLength="21.00" lengthAdjust="spacingAndGlyphs">Phase:</text>
<text x="826.00" y="444.05" font-size="8.4" fill="#0a0a0a" textLength="28.80" lengthAdjust="spacingAndGlyphs">154.986°</text>
<text x="779.10" y="458.10" font-size="8.4" fill="#0a0a0a" textLength="40.30" lengthAdjust="spacingAndGlyphs">Group Delay:</text>
<text x="826.00" y="458.10" font-size="8.4" fill="#0a0a0a" textLength="35.00" lengthAdjust="spacingAndGlyphs">-7.54679ns</text>
</g>
</g>
<g id="statusbar">
<rect x="0" y="473.1" width="900" height="12.9" fill="#d4d0c8"/>
<path d="M0,473.5 H900" stroke="#f6f6f6" stroke-width="0.8"/>
<path d="M866.6,485.6 V476.2 H898.6" stroke="#8a8a8a" stroke-width="0.7" fill="none"/>
<path d="M899.6,481 L894.4,486 M899.6,483 L896.6,486 M899.6,485 L898.6,486" stroke="#8a8a8a" stroke-width="0.7"/>
<path d="M899.6,481.8 L895.2,486 M899.6,483.8 L897.4,486" stroke="#fbfbfb" stroke-width="0.6"/>
<g>
<text x="1.80" y="484.80" font-size="7.7" fill="#0c0c0c" textLength="52.20" lengthAdjust="spacingAndGlyphs">x = 132.765MHz</text>
<text x="62.40" y="484.80" font-size="7.7" fill="#0c0c0c" textLength="82.50" lengthAdjust="spacingAndGlyphs">y = -19.271dB, -363.310°</text>
</g>
</g>
</svg>
</div>
</div>
</body></html>
